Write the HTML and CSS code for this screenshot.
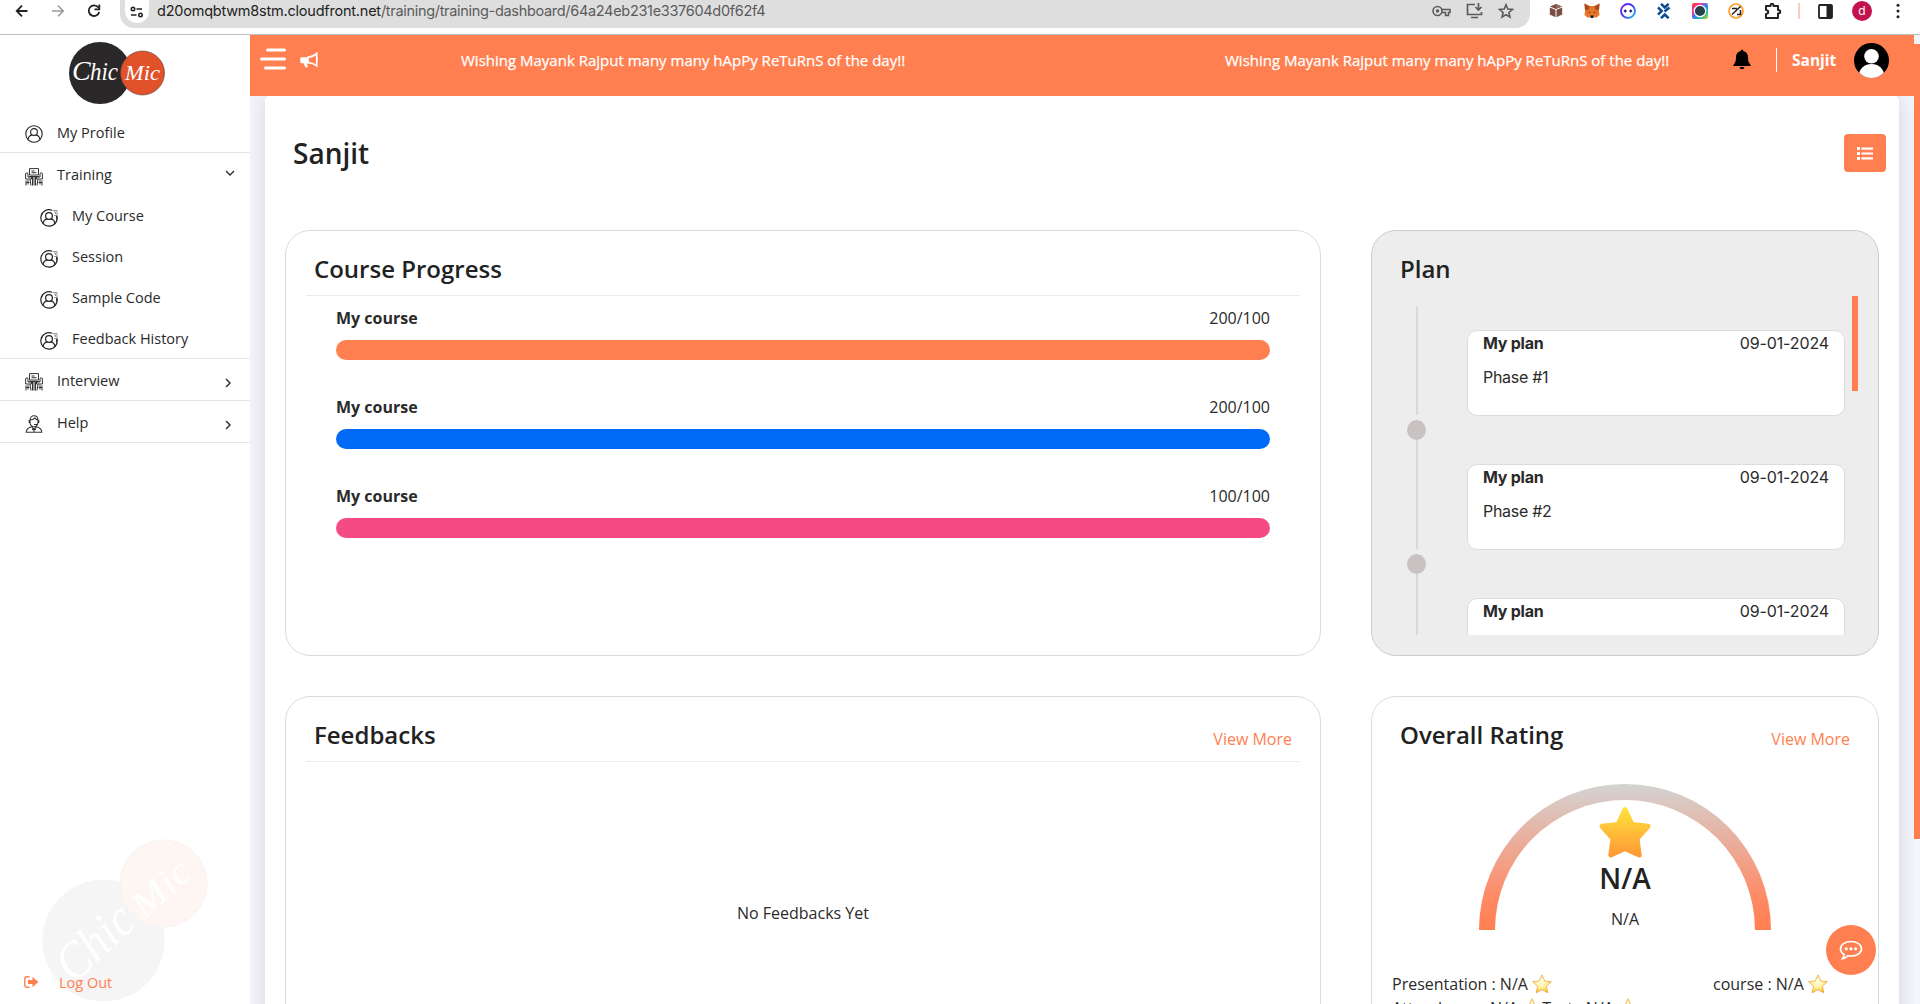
FILE: index.html
```html
<!DOCTYPE html>
<html lang="en">
<head>
<meta charset="utf-8">
<title>Training Dashboard</title>
<link rel="stylesheet" href="styles.css">
</head>
<body>
<svg width="0" height="0" class="defs">
  <defs>
    <linearGradient id="gold" x1="0" y1="0" x2="0" y2="1"><stop offset="0" stop-color="#ffe03c"/><stop offset="1" stop-color="#ff9a35"/></linearGradient>
    <radialGradient id="shine" cx=".45" cy=".35" r=".65"><stop offset="0" stop-color="#fffde0"/><stop offset=".55" stop-color="#fff3a0"/><stop offset="1" stop-color="#f9bd2e"/></radialGradient>
    <linearGradient id="arc" x1="0" y1="0" x2="0" y2="1"><stop offset="0" stop-color="#d3d3d3"/><stop offset=".78" stop-color="#ff8a65"/><stop offset="1" stop-color="#ff7f50"/></linearGradient>
    <linearGradient id="rainbow" x1="0" y1="0" x2="1" y2="1"><stop offset="0" stop-color="#ff3b30"/><stop offset=".3" stop-color="#f0359b"/><stop offset=".5" stop-color="#3a7bff"/><stop offset=".75" stop-color="#20c0a0"/><stop offset="1" stop-color="#ffc020"/></linearGradient>
    <linearGradient id="violet" x1="0" y1="0" x2="1" y2="1"><stop offset="0" stop-color="#7a1fe0"/><stop offset=".5" stop-color="#4038f0"/><stop offset="1" stop-color="#22c8ff"/></linearGradient>
  </defs>
  <symbol id="user" viewBox="0 0 18 18"><g fill="none" stroke="#222" stroke-width="1.1"><circle cx="9" cy="9" r="8.2"/><circle cx="9" cy="7" r="3.4"/><path d="M3 14.700c.4-3 2.300-4.500 4.300-4.800M15 14.700c-.4-3-2.300-4.500-4.300-4.800"/></g></symbol>
  <symbol id="user-tag" viewBox="0 0 18 18"><g fill="none" stroke="#222" stroke-width="1.200"><path d="M12 1.300A8.200 8.200 0 1 0 17 7M16.700 6.500v4"/><circle cx="9" cy="7" r="3.400"/><path d="M3 14.700c.4-3 2.300-4.500 4.300-4.800M15 14.700c-.4-3-2.300-4.500-4.300-4.800"/><path d="M12.500 1.500h4.500v5h-3M14 3h1.500v2" stroke="#888" stroke-width=".9"/></g></symbol>
  <symbol id="desk" viewBox="0 0 18 18"><g fill="none" stroke="#333" stroke-width="1"><path d="M4.500 7V.6h9V7zM6.500 3h3M6.500 4.700h5M4 8.500h10M.6 5.500q1.800-1.500 2.400 0v3.500h3.500v2H.6zM17.400 5.500q-1.800-1.500-2.400 0v3.500h-3.500v2h5.900zM5 11l1 6.500M13 11l-1 6.500M7.500 9v8.500M9 9v8.500M10.500 9v8.500M1 12.500v5M17 12.500v5M3 12v4.500M15 12v4.500M1 14.500h3.500M13.500 14.500H17"/></g></symbol>
  <symbol id="agent" viewBox="0 0 18 18"><g fill="none" stroke="#333" stroke-width="1.100"><path d="M5 5.500C5 2 7 .8 9 .8s4 1.200 4 4.700M5 5.500v2c0 2.500 2 4.500 4 4.500s4-2 4-4.500v-2M5 5c3 0 4-1 5-2 1 1.500 2 2 3 2M4.200 5v3M13.800 5v3M9 9.500h3M1.200 17.300c0-3.500 2-4.500 5.500-5.500L9 15l2.300-3.200c3.500 1 5.500 2 5.500 5.500zM9 13v4M7 14.500l4 0"/></g></symbol>
  <symbol id="star" viewBox="0 0 20 20"><path d="M10 .8l2.800 6.200 6.500.7-4.900 4.500 1.500 6.700L10 15.600l-5.900 3.300 1.500-6.700L.7 7.700 7.200 7z" fill="url(#shine)" stroke="#eda640" stroke-width=".8"/></symbol>
</svg>

<header class="browser">
  <div class="nav">
    <svg width="14" height="14" viewBox="0 0 14 14" fill="none" stroke="#222" stroke-width="1.800"><path d="M12.500 7H2M7 1.700 1.700 7 7 12.300"/></svg>
    <svg width="14" height="14" viewBox="0 0 14 14" fill="none" stroke="#9a9a9a" stroke-width="1.600"><path d="M1 7h11M7 1.700 12.300 7 7 12.300"/></svg>
    <svg width="14" height="14" viewBox="0 0 14 14" fill="none" stroke="#222" stroke-width="1.800"><path d="M11.300 3.500A5.300 5.300 0 1 0 12.200 8M12.300.5v4.800H7.500"/></svg>
  </div>
  <div class="address">
    <span class="tune"><svg width="14" height="12" viewBox="0 0 14 12" fill="none" stroke="#222" stroke-width="1.600"><circle cx="3" cy="3" r="1.700"/><path d="M6.500 3H12M1 9h5.500"/><circle cx="10.500" cy="9" r="1.700"/></svg></span>
    <span class="url">d20omqbtwm8stm.cloudfront.net<span class="path">/training/training-dashboard/64a24eb231e337604d0f62f4</span></span>
    <div class="tools">
      <svg width="19" height="12" viewBox="0 0 19 12" fill="none" stroke="#5b5b5b" stroke-width="1.600"><circle cx="5.500" cy="6" r="4.500"/><circle cx="5.500" cy="6" r="1"/><path d="M9.800 4.500H18v3h-1.500v3h-3v-3H9.800"/></svg>
      <svg width="17" height="16" viewBox="0 0 17 16" fill="none" stroke="#5b5b5b" stroke-width="1.700"><path d="M9 1.500H1.500v10h14V9M5 14.500h7M12.500 0v6.500M9.500 4l3 3 3-3"/></svg>
      <svg width="16" height="16" viewBox="0 0 16 16" fill="none" stroke="#5b5b5b" stroke-width="1.600"><path d="M8 1.800l1.800 4.300 4.700.4-3.600 3 1.100 4.600L8 11.600l-4 2.500 1.100-4.600-3.600-3 4.700-.4z"/></svg>
    </div>
  </div>
  <div class="extensions">
    <svg width="16" height="16" viewBox="0 0 16 16"><path d="M8 1l6 2.500L8 6 2 3.500zM1.800 4.500l5.700 2.300v7.400l-5.700-2.700zM14.200 4.500 8.500 6.800v7.400l5.700-2.700z" fill="#7b4f45"/><path d="M8 1l6 2.500L8 6z" fill="#996b5e"/></svg>
    <svg width="16" height="16" viewBox="0 0 16 16"><path d="M.5.500 6 3h4L15.500.500 15 8l.5 4-3.500 3-2-1.500H6L4 15 .5 12 1 8z" fill="#e9762b"/><path d="M.5.500 6 4 4 7 1 7zM15.500.500 10 4l2 3h3z" fill="#a44e23"/><path d="M6 12.500h4L9.500 15h-3zM4.500 8.500 6.500 9.500 5 10zM11.500 8.500l-2 1 1.500.5z" fill="#282828"/></svg>
    <svg width="16" height="16" viewBox="0 0 16 16"><circle cx="8" cy="8" r="7" fill="#fff" stroke="url(#violet)" stroke-width="1.900"/><path d="M3.500 8l1.700-1.700L7 8 5.200 9.700zM9 8l1.700-1.700L12.500 8l-1.800 1.700z" fill="#261e70"/></svg>
    <svg width="14" height="16" viewBox="0 0 14 16" fill="none" stroke="#0c4b91" stroke-width="2.500"><path d="M4 .8l3.800 3.700L11.600.8M4 15.200l3.800-3.700 3.800 3.700M1 4.300l3.700 3.700L1 11.700M7.500 8.500 12.500 4.500"/></svg>
    <svg width="16" height="16" viewBox="0 0 16 16"><rect width="16" height="16" rx="2" fill="url(#rainbow)"/><circle cx="8" cy="8" r="5.700" fill="#25424c" stroke="#fff" stroke-width="1.200"/></svg>
    <svg width="16" height="16" viewBox="0 0 16 16"><circle cx="8" cy="8" r="7" fill="#fff" stroke="#ff9d2d" stroke-width="1.700"/><path d="M4 5.500h5M12.500 3.500 4 11.500M9 11.500h3.500V7" fill="none" stroke="#222" stroke-width="1.500"/></svg>
    <svg width="18" height="17" viewBox="0 0 18 17" fill="none" stroke="#222" stroke-width="2"><path d="M2 3h4.500c0-3 3-3 3 0H14v4c3 0 3 3.500 0 3.500V15H2v-4c3-.5 3-3.500 0-4z" stroke-linejoin="round"/></svg>
    <i class="sep"></i>
    <svg width="15" height="15" viewBox="0 0 15 15"><rect x="1" y="1" width="13" height="13" rx="1" fill="#fff" stroke="#222" stroke-width="1.800"/><path d="M8.500 1H14v13H8.500z" fill="#222"/></svg>
    <span class="account">d</span>
    <svg width="4" height="16" viewBox="0 0 4 16" fill="#222"><circle cx="2" cy="2.200" r="1.500"/><circle cx="2" cy="8" r="1.500"/><circle cx="2" cy="13.800" r="1.500"/></svg>
  </div>
</header>

<div class="app">
  <aside class="sidebar">
    <div class="logo">
      <svg width="98" height="64" viewBox="0 0 98 64"><circle cx="32" cy="32" r="31" fill="#2b282a"/><circle cx="74.500" cy="32" r="22" fill="#e1522a" stroke="#5b3a30" stroke-width=".6"/><text class="script" x="4" y="39" font-size="28"><tspan>C</tspan><tspan x="22" font-size="25" textLength="28" lengthAdjust="spacingAndGlyphs">hic</tspan></text><text class="script" x="57" y="39" font-size="20" textLength="35" lengthAdjust="spacingAndGlyphs">Mic</text></svg>
    </div>
    <nav class="menu">
      <a class="item first"><svg class="ico" width="18" height="18"><use href="#user"/></svg><span>My Profile</span></a>
      <div class="group">
        <a class="item"><svg class="ico" width="18" height="18"><use href="#desk"/></svg><span>Training</span><svg class="chev down" width="10" height="7" viewBox="0 0 10 7"><path d="M1 1l4 4 4-4"/></svg></a>
        <a class="item sub"><svg class="ico" width="18" height="18"><use href="#user-tag"/></svg><span>My Course</span></a>
        <a class="item sub"><svg class="ico" width="18" height="18"><use href="#user-tag"/></svg><span>Session</span></a>
        <a class="item sub"><svg class="ico" width="18" height="18"><use href="#user-tag"/></svg><span>Sample Code</span></a>
        <a class="item sub"><svg class="ico" width="18" height="18"><use href="#user-tag"/></svg><span>Feedback History</span></a>
      </div>
      <a class="item closed"><svg class="ico" width="18" height="18"><use href="#desk"/></svg><span>Interview</span><svg class="chev" width="7" height="10" viewBox="0 0 7 10"><path d="M1 1l4 4-4 4"/></svg></a>
      <a class="item closed"><svg class="ico" width="18" height="18"><use href="#agent"/></svg><span>Help</span><svg class="chev" width="7" height="10" viewBox="0 0 7 10"><path d="M1 1l4 4-4 4"/></svg></a>
    </nav>
    <svg class="watermark" width="170" height="170" viewBox="0 0 170 170"><circle cx="63.500" cy="102.500" r="61" fill="#f5f5f5"/><circle cx="123.500" cy="45.500" r="43.500" fill="#fef6f3" stroke="#f8f3f1"/><g transform="rotate(-43 63 103)"><text class="script" x="12" y="115" font-size="52" textLength="88" lengthAdjust="spacingAndGlyphs">Chic</text><text class="script" x="108" y="116" font-size="37" textLength="67" lengthAdjust="spacingAndGlyphs">Mic</text></g></svg>
    <a class="logout"><svg width="15" height="12" viewBox="0 0 15 12" fill="#ff7f50"><path d="M5.500.7H3Q.8.700.8 3v6q0 2.300 2.200 2.300h2.500" fill="none" stroke="#ff7f50" stroke-width="1.400"/><path d="M4 4h4.500V.8L14.300 6 8.500 11.200V8H4z"/></svg><span>Log Out</span></a>
  </aside>

  <div class="main">
    <div class="topbar">
      <svg class="burger" width="26" height="22" viewBox="0 0 26 22" stroke="#fff" stroke-width="3" stroke-linecap="round"><path d="M7.500 2h17M1.500 11h23M5.500 20h19"/></svg>
      <svg class="horn" width="19" height="16" viewBox="0 0 19 16"><path d="M1.500 5.200H8v6H6.800l1 3.300q.2 1-.9 1H5.500L3.700 11.200H1.500Q.3 11.200.3 10V6.500Q.3 5.200 1.500 5.200z" fill="#fff"/><path d="M8 5.300q5-.5 8.700-4v12.500q-3.700-3-8.700-3.200z" fill="none" stroke="#fff" stroke-width="1.700"/><path d="M17 5.800q2.200 1.500 0 3.200z" fill="#fff"/></svg>
      <div class="marquee"><span>Wishing Mayank Rajput many many hApPy ReTuRnS of the day!!</span><span>Wishing Mayank Rajput many many hApPy ReTuRnS of the day!!</span></div>
      <svg class="bell" width="18" height="21" viewBox="0 0 18 21"><path d="M9 .5q1.300 0 1.300 1.500C14 3 15 5.500 15 8.500c0 4 1 5.500 2.700 7.500v1H.3v-1C2 14 3 12.500 3 8.500 3 5.500 4 3 7.700 2 7.700.500 9 .5 9 .5zM6.500 18h5q-.5 2.300-2.500 2.300T6.500 18z"/></svg>
      <div class="who">Sanjit</div>
      <svg class="avatar" width="35" height="35" viewBox="0 0 35 35"><clipPath id="av"><circle cx="17.500" cy="17.500" r="17.500"/></clipPath><g clip-path="url(#av)"><rect width="35" height="35" fill="#000"/><circle cx="17.500" cy="13.300" r="7.300" fill="#fff"/><ellipse cx="17.500" cy="32" rx="12.500" ry="11" fill="#fff"/></g></svg>
    </div>

    <div class="stage">
      <main class="panel">
        <div class="heading"><h1>Sanjit</h1><button class="list-btn"><svg width="16" height="13" viewBox="0 0 16 13" fill="#fff"><path d="M0 0h3v3H0zM0 5h3v3H0zM0 10h3v3H0zM4.500 .5H16v2.200H4.500zM4.500 5.400H16v2.200H4.500zM4.500 10.300H16v2.200H4.500z"/></svg></button></div>
        <div class="grid">
          <section class="card">
            <div class="card-head"><h2>Course Progress</h2></div>
            <div class="courses">
              <div class="course"><div class="line"><b>My course</b><span>200/100</span></div><div class="bar orange"></div></div>
              <div class="course"><div class="line"><b>My course</b><span>200/100</span></div><div class="bar blue"></div></div>
              <div class="course"><div class="line"><b>My course</b><span>100/100</span></div><div class="bar pink"></div></div>
            </div>
          </section>
          <section class="card plan">
            <div class="card-head"><h2>Plan</h2></div>
            <div class="plan-body">
              <div class="steps">
                <div class="step"><div class="rail"><i></i><em></em></div><article><div class="line"><b>My plan</b><span>09-01-2024</span></div><p>Phase #1</p></article></div>
                <div class="step"><div class="rail"><i></i><em></em></div><article><div class="line"><b>My plan</b><span>09-01-2024</span></div><p>Phase #2</p></article></div>
                <div class="step"><div class="rail"><i></i><em></em></div><article><div class="line"><b>My plan</b><span>09-01-2024</span></div></article></div>
              </div>
              <div class="thumb"></div>
            </div>
          </section>
          <section class="card">
            <div class="card-head"><h2>Feedbacks</h2><a>View More</a></div>
            <div class="empty">No Feedbacks Yet</div>
          </section>
          <section class="card rating">
            <div class="card-head"><h2>Overall Rating</h2><a>View More</a></div>
            <div class="gauge">
              <svg class="arc" width="292" height="146" viewBox="0 0 292 146"><path d="M0 146a146 146 0 0 1 292 0h-16a130 130 0 0 0-260 0z" fill="url(#arc)"/></svg>
              <div class="score">
                <svg width="54" height="54" viewBox="0 0 54 54"><path d="M27 4.500 34 19.500 50 21.300 39 33.500 41.200 50 27 43.500 12.800 50 15 33.500 4 21.300 20 19.500z" fill="url(#gold)" stroke="url(#gold)" stroke-width="5" stroke-linejoin="round"/></svg>
                <strong>N/A</strong><span>N/A</span>
              </div>
            </div>
            <div class="metrics">
              <span class="m1">Presentation : N/A <svg width="20" height="20"><use href="#star"/></svg></span><span class="m2">course : N/A <svg width="20" height="20"><use href="#star"/></svg></span>
              <span class="m3">Attendance : N/A <svg width="20" height="20"><use href="#star"/></svg>Test : N/A <svg width="20" height="20"><use href="#star"/></svg></span>
            </div>
          </section>
        </div>
      </main>
    </div>
  </div>
  <div class="page-scroll"><i></i></div>
  <button class="chat"><svg width="24" height="21" viewBox="0 0 24 21" fill="none" stroke="#fff" stroke-width="1.700"><path d="M12 1.500c6 0 10.500 3.200 10.500 7.300S18 16 12 16c-1 0-2 0-3-.3-1.500 1.500-3.500 2.800-5.500 3 1-1.200 1.500-2.500 1.500-4.200C2.800 13.300 1.500 11.200 1.500 8.800 1.500 4.700 6 1.500 12 1.500z"/><g fill="#fff" stroke="none"><circle cx="7.300" cy="8.800" r="1.600"/><circle cx="12" cy="8.800" r="1.600"/><circle cx="16.700" cy="8.800" r="1.600"/></g></svg></button>
</div>
</body>
</html>
```

FILE: styles.css
```css
* { box-sizing: border-box; }
body { margin: 0; width: 1920px; height: 1004px; overflow: hidden; background: #fff; color: #2a2a2a; font: 16px/24px "Open Sans", sans-serif; display: flex; flex-direction: column; }
h1, h2, p { margin: 0; }
svg { display: block; flex: none; }
button { border: 0; padding: 0; display: flex; align-items: center; justify-content: center; }
.defs { position: absolute; }

.browser { height: 35px; flex: none; border-bottom: 1px solid #bcc0bf; display: flex; align-items: flex-start; font-family: Inter, sans-serif; }
.nav { width: 120px; height: 22px; padding-left: 15px; display: flex; align-items: center; gap: 22px; }
.address { width: 1410px; height: 28px; background: #dedede; border-radius: 0 0 14px 14px; display: flex; align-items: flex-start; padding-left: 5px; }
.tune { width: 24px; height: 23px; background: #fff; border-radius: 0 0 12px 12px; display: flex; align-items: center; justify-content: center; }
.url { padding-left: 8px; line-height: 22px; font-size: 14.5px; letter-spacing: -.22px; color: #222; flex: 1; }
.path { color: #5b5b5b; letter-spacing: -.31px; }
.tools { display: flex; align-items: center; gap: 15px; height: 22px; padding-right: 16px; }
.extensions { flex: 1; height: 22px; display: grid; grid-template-columns: repeat(6, 36px) 38px 14px 38px 36px 36px; align-items: center; justify-items: center; padding-left: 8px; }
.sep { width: 2px; height: 16px; background: #fccfba; }
.account { width: 20px; height: 20px; border-radius: 50%; background: #c2134f; color: #fff; font-size: 12px; line-height: 20px; text-align: center; }

.app { position: relative; flex: 1; display: flex; min-height: 0; }
.sidebar { position: relative; width: 250px; display: flex; flex-direction: column; font-size: 14.5px; }
.logo { height: 78px; padding: 6px 0 0 68px; }
.script { font-family: "Liberation Serif", serif; font-style: italic; fill: #fff; }
.menu { display: flex; flex-direction: column; }
.item { display: flex; align-items: center; height: 41px; padding: 0 20px 0 25px; }
.item span { flex: 1; padding-left: 14px; line-height: 20px; }
.item .ico { margin-top: 2px; }
.first { height: 40px; border-bottom: 1px solid #e4e4e4; }
.group { border-bottom: 1px solid #e4e4e4; padding: 2px 0 0; height: 206px; }
.group .item span { margin-top: -2px; }
.sub { padding-left: 40px; }
.closed { height: 42px; border-bottom: 1px solid #e4e4e4; }
.closed span { margin-top: 2px; }
.closed .ico { margin-top: 4px; }
.chev { fill: none; stroke: #333; stroke-width: 1.500; margin-top: 2px; }
.closed .chev { margin-right: -2px; margin-top: 6px; }
.down { margin: -4px -5px 0 0; }
.watermark { position: absolute; left: 40px; top: 803px; }
.logout { position: relative; display: flex; align-items: center; gap: 21px; margin: auto 0 9px 24px; color: #ff7f50; }
.logout svg { margin-top: -2px; }
.logout span { margin-left: -1px; }

.main { flex: 1; display: flex; flex-direction: column; min-width: 0; }
.topbar { height: 61px; flex: none; background: #ff7f50; color: #fff; display: flex; padding-left: 10px; }
.burger { margin-top: 13px; }
.horn { margin: 17px 0 0 14px; }
.marquee { width: 1389px; padding-left: 142px; display: flex; overflow: hidden; white-space: nowrap; line-height: 51px; font-size: 15px; -webkit-text-stroke: .25px #fff; }
.marquee span { width: 764px; flex: none; }
.bell { margin: 14px 0 0 24.500px; }
.who { margin: 13px 0 0 25.500px; padding-left: 15px; height: 24px; border-left: 1px solid #fff; font-weight: 700; font-size: 15.500px; width: 78px; }
.avatar { margin-top: 8px; }
.stage { flex: 1; background: #f4f5fb; padding: 0 15px; min-height: 0; overflow: hidden; }
.panel { background: #fff; height: 1100px; border-radius: 5px; box-shadow: 0 0 20px rgba(30,30,70,.15); padding: 38px 20px 0; }
.heading { display: flex; justify-content: space-between; padding-left: 8px; margin-right: -7px; height: 96px; }
h1 { font-size: 28px; line-height: 38px; font-weight: 600; color: #222; }
.list-btn { width: 42px; height: 38px; border-radius: 4px; background: #ff7f50; }
.grid { display: grid; grid-template-columns: 1036px 508px; column-gap: 50px; grid-template-rows: 426px 426px; row-gap: 40px; }
.card { border: 1px solid #dcdcdc; border-radius: 25px; padding: 20px; display: flex; flex-direction: column; overflow: hidden; }
.card-head { height: 45px; flex: none; border-bottom: 1px solid #ebebeb; padding: 0 8px; display: flex; justify-content: space-between; }
h2 { font-size: 24px; line-height: 36px; font-weight: 600; color: #222; }
.card-head a { color: #ff7f50; line-height: 45px; }
.courses { padding: 10px 30px 0; display: flex; flex-direction: column; gap: 29px; }
.course { height: 60px; }
.line { display: flex; justify-content: space-between; line-height: 24px; }
.bar { height: 20px; border-radius: 10px; margin-top: 10px; }
.orange { background: #ff7f50; }
.blue { background: #006af6; }
.pink { background: #f64a84; }
.plan { background: #ededed; border-color: #ccc; font-family: Inter, sans-serif; }
.plan h2 { font-family: "Open Sans", sans-serif; }
.plan-body { height: 339px; display: flex; justify-content: space-between; }
.steps { padding: 10px 0 0 15px; overflow: hidden; width: 454px; }
.step { display: flex; height: 134px; }
.rail { width: 60px; display: flex; flex-direction: column; align-items: flex-start; }
.rail i { width: 2px; height: 109px; margin-left: 9px; background: #d9d9d9; }
.rail em { width: 19px; height: 20px; border-radius: 50%; background: #c9c2c2; margin-top: 5px; }
.step article { width: 378px; height: 86px; margin-top: 24px; background: #fff; border: 1px solid #dcdcdc; border-radius: 10px; padding: 0 15px; }
.step article span { letter-spacing: -.12px; }
.step article b { letter-spacing: -.25px; }
.step p { margin-top: 10px; letter-spacing: -.3px; }
.thumb { width: 6px; height: 95px; background: #ff7f50; }
.empty { text-align: center; padding-top: 139px; }
.rating .card-head { border: 0; }
.gauge { display: flex; flex-direction: column; align-items: center; padding-top: 22px; }
.score { display: flex; flex-direction: column; align-items: center; margin-top: -125px; }
.score strong { font-size: 28px; font-weight: 600; line-height: 38px; color: #222; }
.score span { margin-top: 10px; }
.metrics { display: grid; grid-template-columns: 321px 1fr; line-height: 24px; margin-top: 41px; white-space: nowrap; }
.metrics span { display: flex; align-items: center; white-space: pre; }
.m3 { grid-column: 1 / 3; }
.page-scroll { width: 6px; background: #f4f5fb; padding-top: 9px; }
.page-scroll i { display: block; height: 795px; background: #ff7f50; }
.chat { position: absolute; left: 1826px; top: 890px; width: 50px; height: 50px; border-radius: 50%; background: #ff7f50; }
```
